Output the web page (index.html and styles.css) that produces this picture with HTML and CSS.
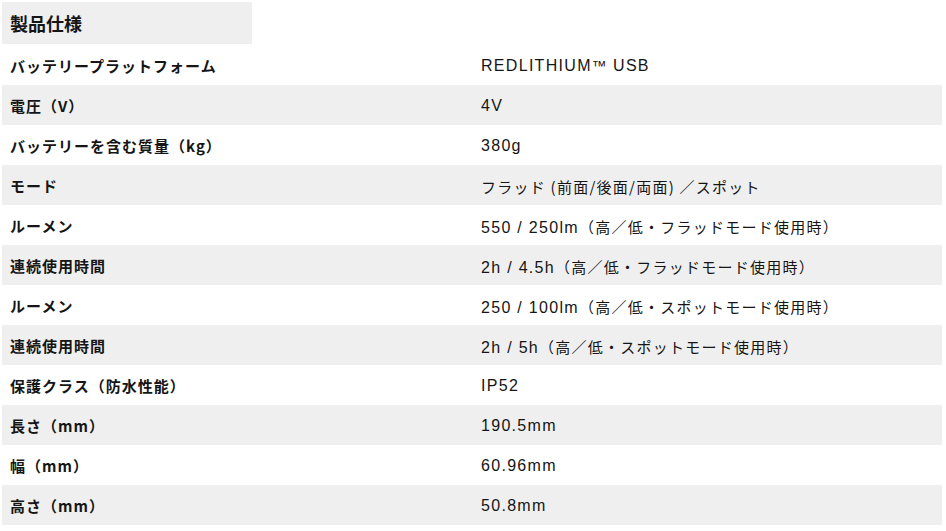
FILE: index.html
```html
<!DOCTYPE html>
<html lang="ja">
<head>
<meta charset="utf-8">
<title>製品仕様</title>
<link rel="stylesheet" href="styles.css">
</head>
<body>
<div class="spec">
  <div class="spec-title">製品仕様</div>
  <div class="spec-table">
    <div class="row"><div class="label">バッテリープラットフォーム</div><div class="value">REDLITHIUM<span class="tm">™</span> USB</div></div>
    <div class="row"><div class="label">電圧（V）</div><div class="value">4V</div></div>
    <div class="row"><div class="label">バッテリーを含む質量（kg）</div><div class="value">380g</div></div>
    <div class="row"><div class="label">モード</div><div class="value"><span class="ja">フラッド (前面/後面/両面) ／スポット</span></div></div>
    <div class="row"><div class="label">ルーメン</div><div class="value">550 / 250lm<span class="ja">（高／低・フラッドモード使用時）</span></div></div>
    <div class="row"><div class="label">連続使用時間</div><div class="value">2h / 4.5h<span class="ja">（高／低・フラッドモード使用時）</span></div></div>
    <div class="row"><div class="label">ルーメン</div><div class="value">250 / 100lm<span class="ja">（高／低・スポットモード使用時）</span></div></div>
    <div class="row"><div class="label">連続使用時間</div><div class="value">2h / 5h<span class="ja">（高／低・スポットモード使用時）</span></div></div>
    <div class="row"><div class="label">保護クラス（防水性能）</div><div class="value">IP52</div></div>
    <div class="row"><div class="label">長さ（mm）</div><div class="value">190.5mm</div></div>
    <div class="row"><div class="label">幅（mm）</div><div class="value">60.96mm</div></div>
    <div class="row"><div class="label">高さ（mm）</div><div class="value">50.8mm</div></div>
  </div>
</div>
</body>
</html>
```

FILE: styles.css
```css
html, body {
  margin: 0;
  padding: 0;
  background: #ffffff;
}
body {
  padding: 2px;
  font-family: "Liberation Sans", "Noto Sans CJK JP", sans-serif;
  color: #151515;
}
.spec {
  width: 940px;
}
.spec-title {
  width: 250px;
  height: 42px;
  box-sizing: border-box;
  background: #efefef;
  display: flex;
  align-items: center;
  padding-left: 8px;
  font-family: "Noto Sans CJK JP", sans-serif;
  font-weight: 700;
  font-size: 18px;
  margin-bottom: 1px;
}
.spec-table {
  display: flex;
  flex-direction: column;
}
.row {
  display: grid;
  grid-template-columns: 470px 470px;
  height: 40px;
  align-items: center;
}
.row:nth-child(even) {
  background: #efefef;
}
.label {
  padding-left: 8px;
  font-family: "Noto Sans CJK JP", sans-serif;
  font-weight: 700;
  font-size: 15px;
  letter-spacing: 1px;
}
.value {
  padding-left: 9px;
  padding-top: 2px;
  font-size: 16px;
  letter-spacing: 1.3px;
  white-space: nowrap;
}
.value .tm {
  font-size: 15px;
  letter-spacing: 0.5px;
}
.value .ja {
  font-family: "Noto Sans CJK JP", sans-serif;
  font-size: 15px;
  letter-spacing: 1.25px;
}
```
